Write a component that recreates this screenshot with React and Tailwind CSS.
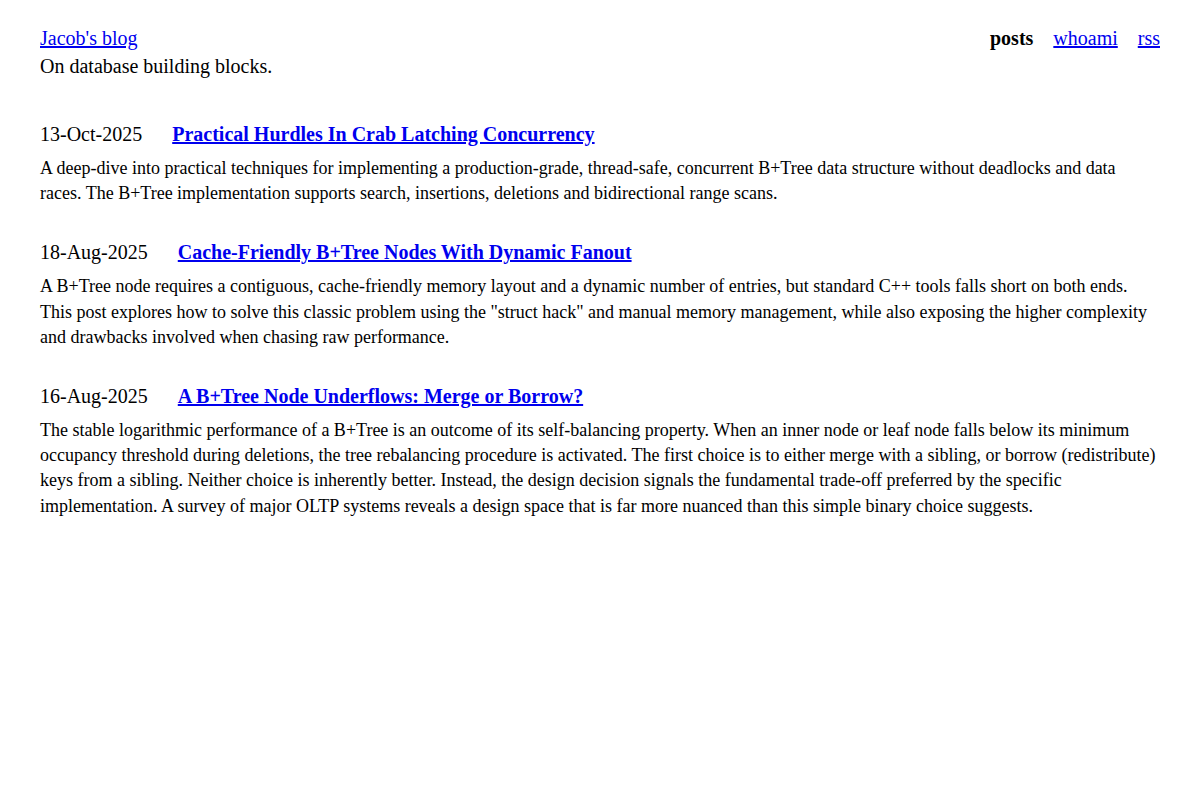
import React from "react"

// Post index: newest first
const posts = [
  {
    date: "13-Oct-2025",
    title: "Practical Hurdles In Crab Latching Concurrency",
    summary:
      "A deep-dive into practical techniques for implementing a production-grade, thread-safe, concurrent B+Tree data structure without deadlocks and data races. The B+Tree implementation supports search, insertions, deletions and bidirectional range scans.",
  },
  {
    date: "18-Aug-2025",
    title: "Cache-Friendly B+Tree Nodes With Dynamic Fanout",
    summary:
      'A B+Tree node requires a contiguous, cache-friendly memory layout and a dynamic number of entries, but standard C++ tools falls short on both ends. This post explores how to solve this classic problem using the "struct hack" and manual memory management, while also exposing the higher complexity and drawbacks involved when chasing raw performance.',
  },
  {
    date: "16-Aug-2025",
    title: "A B+Tree Node Underflows: Merge or Borrow?",
    summary:
      "The stable logarithmic performance of a B+Tree is an outcome of its self-balancing property. When an inner node or leaf node falls below its minimum occupancy threshold during deletions, the tree rebalancing procedure is activated. The first choice is to either merge with a sibling, or borrow (redistribute) keys from a sibling. Neither choice is inherently better. Instead, the design decision signals the fundamental trade-off preferred by the specific implementation. A survey of major OLTP systems reveals a design space that is far more nuanced than this simple binary choice suggests.",
  },
]

function Header() {
  return (
    <header className="flex justify-between items-start text-[20px] leading-[28px]">
      <div>
        <a href="#" className="text-[#0000ee] underline">
          Jacob's blog
        </a>
        <div>On database building blocks.</div>
      </div>
      <nav className="flex gap-5">
        <span className="font-bold">posts</span>
        <a href="#" className="text-[#0000ee] underline">
          whoami
        </a>
        <a href="#" className="text-[#0000ee] underline">
          rss
        </a>
      </nav>
    </header>
  )
}

function PostItem({ post }) {
  return (
    <article className="mt-8 first:mt-0">
      <div className="flex gap-[30px] text-[20px] leading-[28px]">
        <span>{post.date}</span>
        <a href="#" className="font-bold text-[#0000ee] underline">
          {post.title}
        </a>
      </div>
      <p className="mt-2 text-[18px] leading-[1.4]">{post.summary}</p>
    </article>
  )
}

export default function App() {
  return (
    <div
      className="min-h-screen bg-white text-black px-10 pt-6"
      style={{ fontFamily: '"Liberation Serif", "Times New Roman", serif' }}
    >
      <Header />
      <main className="mt-10">
        {posts.map((post) => (
          <PostItem key={post.date} post={post} />
        ))}
      </main>
    </div>
  )
}
